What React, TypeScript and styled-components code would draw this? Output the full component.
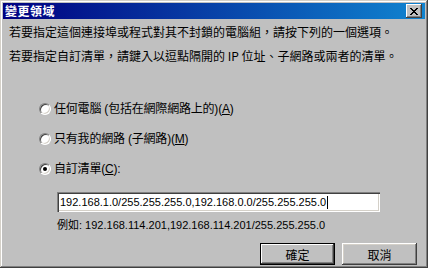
import React from "react";
import styled, { createGlobalStyle } from "styled-components";

const GlobalStyle = createGlobalStyle`
  html, body {
    margin: 0;
    padding: 0;
    background: #c0c0c0;
  }
  body {
    font-family: "Liberation Sans", "Noto Sans CJK TC", sans-serif;
    font-size: 12px;
    color: #000000;
  }
`;

// Classic 3D dialog frame
const Window = styled.div`
  width: 428px;
  height: 268px;
  box-sizing: border-box;
  padding: 3px;
  background: #c0c0c0;
  box-shadow: inset -1px -1px #404040, inset 1px 1px #d4d0c8,
    inset -2px -2px #808080, inset 2px 2px #ffffff;
  display: flex;
  flex-direction: column;
`;

const TitleBar = styled.div`
  height: 18px;
  display: flex;
  align-items: center;
  justify-content: space-between;
  padding: 0 3px 0 2px;
  background: linear-gradient(to right, #000080, #1084d0);
`;

const TitleText = styled.span`
  color: #ffffff;
  font-family: "Noto Sans CJK TC", sans-serif;
  font-weight: 700;
  font-size: 12px;
  line-height: 16px;
  letter-spacing: 0.5px;
`;

const CloseButton = styled.div`
  width: 16px;
  height: 14px;
  box-sizing: border-box;
  background: #c0c0c0;
  box-shadow: inset -1px -1px #404040, inset 1px 1px #ffffff,
    inset -2px -2px #808080;
  display: flex;
  align-items: center;
  justify-content: center;
`;

const Content = styled.div`
  flex: 1;
  display: flex;
  flex-direction: column;
  padding: 5px 8px 0 6px;
`;

const Line = styled.div<{ $top?: number }>`
  margin-top: ${(p) => p.$top ?? 0}px;
  line-height: 16px;
  white-space: nowrap;
  font-family: "Noto Sans CJK TC", sans-serif;
`;

const RadioGroup = styled.div`
  margin-top: 37px;
  margin-left: 30px;
  display: flex;
  flex-direction: column;
  gap: 14px;
`;

const RadioRow = styled.div`
  display: flex;
  align-items: center;
  gap: 3px;
  height: 16px;
  white-space: nowrap;
`;

const RadioCircle = styled.span<{ $checked?: boolean }>`
  width: 12px;
  height: 12px;
  box-sizing: border-box;
  border-radius: 50%;
  background: #ffffff;
  border-top: 1px solid #808080;
  border-left: 1px solid #808080;
  border-right: 1px solid #ffffff;
  border-bottom: 1px solid #ffffff;
  box-shadow: inset 1px 1px #404040, inset -1px -1px #d4d0c8;
  display: flex;
  align-items: center;
  justify-content: center;

  &::after {
    content: "";
    width: 4px;
    height: 4px;
    border-radius: 50%;
    background: ${(p) => (p.$checked ? "#000000" : "transparent")};
  }
`;

const Label = styled.span`
  line-height: 16px;
  letter-spacing: -0.2px;
`;

const Key = styled.span`
  text-decoration: underline;
`;

const IndentBlock = styled.div`
  margin-left: 48px;
  display: flex;
  flex-direction: column;
`;

const TextField = styled.div`
  margin-top: 15px;
  width: 323px;
  height: 20px;
  box-sizing: border-box;
  background: #ffffff;
  box-shadow: inset 1px 1px #808080, inset 2px 2px #404040,
    inset -1px -1px #ffffff, inset -2px -2px #d4d0c8;
  padding: 0 3px;
  display: flex;
  align-items: center;
  font-size: 11px;
  white-space: nowrap;
`;

const Caret = styled.span`
  display: inline-block;
  width: 1px;
  height: 13px;
  background: #000000;
  margin-left: 1px;
`;

const Example = styled.div`
  margin-top: 6px;
  line-height: 14px;
  font-size: 11px;
  white-space: nowrap;
`;

const ButtonRow = styled.div`
  margin-top: 11px;
  display: flex;
  justify-content: flex-end;
  gap: 7px;
`;

const Button = styled.div<{ $default?: boolean }>`
  width: 75px;
  height: 22px;
  box-sizing: border-box;
  display: flex;
  align-items: center;
  justify-content: center;
  background: #c0c0c0;
  font-family: "Noto Sans CJK TC", sans-serif;
  font-size: 12px;
  border: ${(p) => (p.$default ? "1px solid #000000" : "none")};
  box-shadow: ${(p) =>
    p.$default
      ? "inset -1px -1px #404040, inset 1px 1px #ffffff, inset -2px -2px #808080"
      : "inset -1px -1px #404040, inset 1px 1px #ffffff, inset -2px -2px #808080, inset 2px 2px #d4d0c8"};
`;

const CloseIcon = () => (
  <svg width="8" height="7" viewBox="0 0 8 7">
    <path
      d="M0 0h2v1h1v1h2V1h1V0h2v1H7v1H6v1H5v1h1v1h1v1h1v1H6V6H5V5H3v1H2v1H0V6h1V5h1V4h1V3H2V2H1V1H0z"
      fill="#000000"
    />
  </svg>
);

export default function App() {
  return (
    <>
      <GlobalStyle />
      <Window>
        <TitleBar>
          <TitleText>變更領域</TitleText>
          <CloseButton>
            <CloseIcon />
          </CloseButton>
        </TitleBar>
        <Content>
          <Line $top={0}>
            若要指定這個連接埠或程式對其不封鎖的電腦組，請按下列的一個選項。
          </Line>
          <Line $top={8}>
            若要指定自訂清單，請鍵入以逗點隔開的 IP 位址、子網路或兩者的清單。
          </Line>
          <RadioGroup>
            <RadioRow>
              <RadioCircle />
              <Label>
                任何電腦 (包括在網際網路上的)(<Key>A</Key>)
              </Label>
            </RadioRow>
            <RadioRow>
              <RadioCircle />
              <Label>
                只有我的網路 (子網路)(<Key>M</Key>)
              </Label>
            </RadioRow>
            <RadioRow>
              <RadioCircle $checked />
              <Label>
                自訂清單(<Key>C</Key>):
              </Label>
            </RadioRow>
          </RadioGroup>
          <IndentBlock>
            <TextField>
              192.168.1.0/255.255.255.0,192.168.0.0/255.255.255.0
              <Caret />
            </TextField>
            <Example>
              例如: 192.168.114.201,192.168.114.201/255.255.255.0
            </Example>
          </IndentBlock>
          <ButtonRow>
            <Button $default>確定</Button>
            <Button>取消</Button>
          </ButtonRow>
        </Content>
      </Window>
    </>
  );
}
